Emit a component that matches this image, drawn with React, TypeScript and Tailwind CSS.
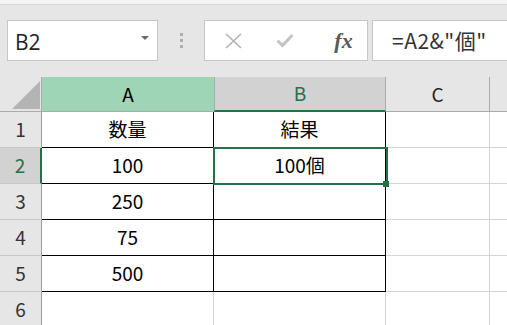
const GREEN = "#217346";

const rows = [
	{ n: 1, a: "数量", b: "結果" },
	{ n: 2, a: "100", b: "100個" },
	{ n: 3, a: "250", b: "" },
	{ n: 4, a: "75", b: "" },
	{ n: 5, a: "500", b: "" },
	{ n: 6, a: "", b: "" },
];

export default function App() {
	return (
		<div
			className="w-[507px] h-[325px] overflow-hidden bg-white text-black"
			style={{ fontFamily: '"Noto Sans CJK JP", "Noto Sans", sans-serif' }}
		>
			{/* Formula bar */}
			<div className="h-[77px] bg-[#e6e6e6] flex flex-col">
				<div className="h-[5px] bg-[#f3f3f3] border-b border-[#d6d6d6]" />
				<div className="flex items-start pt-[15px] pl-[7px]">
					{/* Name box */}
					<div className="w-[151px] h-[41px] bg-white border border-[#c6c6c6] flex items-center justify-between pl-[7px] pr-[8px]">
						<span
							className="text-[21px] text-[#222] leading-none mt-[3px]"
							style={{ fontFamily: '"Open Sans", "Liberation Sans", sans-serif' }}
						>
							B2
						</span>
						<svg width="8" height="5" viewBox="0 0 8 5" className="mt-[-4px]">
							<path d="M0 0 H8 L4 4 Z" fill="#6b6b6b" />
						</svg>
					</div>
					{/* Splitter dots */}
					<div className="w-[46px] h-[41px] flex flex-col items-center justify-center gap-[3px]">
						<div className="w-[3px] h-[3px] bg-[#adadad]" />
						<div className="w-[3px] h-[3px] bg-[#adadad]" />
						<div className="w-[3px] h-[3px] bg-[#adadad]" />
					</div>
					{/* Buttons */}
					<div className="w-[164px] h-[41px] bg-white border border-[#c6c6c6] flex items-center">
						<div className="w-[55px] flex justify-center pl-[1px]">
							<svg width="17" height="16" viewBox="0 0 17 16">
								<path d="M1 1 L16 15 M16 1 L1 15" stroke="#b4b4b4" strokeWidth="1.7" fill="none" />
							</svg>
						</div>
						<div className="w-[50px] flex justify-center">
							<svg width="18" height="15" viewBox="0 0 18 15">
								<path d="M1.5 7.5 L6.5 12.5 L16.5 2" stroke="#c4c4c4" strokeWidth="3" fill="none" />
							</svg>
						</div>
						<div
							className="flex-1 flex justify-center text-[22px] italic font-bold text-[#5a5a5a] pl-[10px] leading-none"
							style={{ fontFamily: '"Liberation Serif", serif' }}
						>
							fx
						</div>
					</div>
					<div className="ml-[4px] flex-1 h-[41px] bg-white border border-[#c6c6c6] border-r-0 flex items-center pl-[19px]">
						<span className="text-[21px] text-[#333] leading-none tracking-[0.5px]">=A2&amp;"個"</span>
					</div>
				</div>
			</div>

			{/* Sheet */}
			<div className="relative grid grid-cols-[42px_172px_172px_104px_1fr] grid-rows-[35px_repeat(6,36px)] text-[19px]">
				{/* Header row */}
				<div className="bg-[#e6e6e6] border-r border-b border-[#ababab] relative">
					<svg width="28" height="28" viewBox="0 0 28 28" className="absolute left-[12px] top-[4px]">
						<path d="M28 0 V28 H0 Z" fill="#b4b4b4" />
					</svg>
				</div>
				<div className="bg-[#9fd5b7] border-b border-[#ababab] flex items-center justify-center">A</div>
				<div className="bg-[#d2d2d2] border-l border-r border-[#ababab] border-b-2 border-b-[#217346] flex items-center justify-center text-[#217346]">
					B
				</div>
				<div className="bg-[#e6e6e6] border-r border-b border-[#ababab] flex items-center justify-center text-[#222]">C</div>
				<div className="bg-[#e6e6e6] border-b border-[#ababab]" />

				{rows.map((r) => {
					const inTable = r.n <= 5;
					const sel = r.n === 2;
					return [
						<div
							key={`h${r.n}`}
							className={`flex items-center justify-center border-b border-[#c8c8c8] ${
								sel
									? "bg-[#d2d2d2] text-[#217346] border-r-2 border-r-[#217346]"
									: "bg-[#e6e6e6] text-[#333] border-r border-r-[#9e9e9e]"
							}`}
						>
							{r.n}
						</div>,
						<div
							key={`a${r.n}`}
							className={`flex items-center justify-center ${
								inTable ? "border-r border-b border-black" : "border-r border-[#d4d4d4]"
							}`}
						>
							{r.a}
						</div>,
						<div
							key={`b${r.n}`}
							className={`flex items-center justify-center ${
								inTable ? "border-r border-b border-black" : "border-r border-[#d4d4d4]"
							}`}
						>
							{r.b}
						</div>,
						<div
							key={`c${r.n}`}
							className={`border-r border-[#d4d4d4] ${inTable ? "border-b" : ""}`}
						/>,
						<div key={`d${r.n}`} className={`border-[#d4d4d4] ${inTable ? "border-b" : ""}`} />,
					];
				})}

				{/* Selection B2 */}
				<div
					className="absolute left-[213px] top-[70px] w-[175px] h-[38px] border-2 pointer-events-none"
					style={{ borderColor: GREEN }}
				/>
				<div
					className="absolute left-[383px] top-[104px] w-[6px] h-[6px] pointer-events-none"
					style={{ backgroundColor: GREEN }}
				/>
			</div>
		</div>
	);
}
